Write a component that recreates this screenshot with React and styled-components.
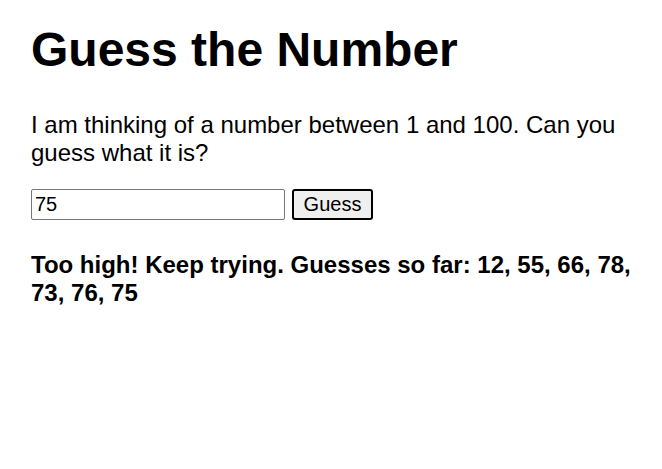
import React, { useState } from "react";
import styled, { createGlobalStyle } from "styled-components";

const GlobalStyle = createGlobalStyle`
  body {
    margin: 0;
    background: #ffffff;
    font-family: "Liberation Sans", Arial, sans-serif;
    color: #000000;
  }
`;

const Page = styled.div`
  padding: 0 31px;
`;

const Title = styled.h1`
  font-size: 48px;
  font-weight: bold;
  margin: 22px 0 34px;
`;

const Intro = styled.p`
  font-size: 24px;
  margin: 0 0 23px;
  line-height: 1.15;
`;

const Form = styled.form`
  display: flex;
  gap: 7px;
  align-items: stretch;
`;

const Input = styled.input`
  width: 254px;
  box-sizing: border-box;
  height: 31px;
  font-family: inherit;
  font-size: 20px;
  padding: 2px 3px;
  border: 1px solid #767676;
  border-radius: 2px;
`;

const Button = styled.button`
  font-family: inherit;
  font-size: 20px;
  height: 31px;
  width: 81px;
  box-sizing: border-box;
  background: #efefef;
  border: 2px solid #000000;
  border-radius: 3px;
  color: #000000;
`;

const Result = styled.p`
  font-size: 24px;
  font-weight: bold;
  line-height: 1.15;
  margin: 31px 0 0;
`;

const App = () => {
  const [value, setValue] = useState("75");
  const guesses = [12, 55, 66, 78, 73, 76, 75];
  const message = `Too high! Keep trying. Guesses so far: ${guesses.join(", ")}`;

  return (
    <Page>
      <GlobalStyle />
      <Title>Guess the Number</Title>
      <Intro>I am thinking of a number between 1 and 100. Can you guess what it is?</Intro>
      <Form onSubmit={(e) => e.preventDefault()}>
        <Input value={value} onChange={(e) => setValue(e.target.value)} />
        <Button type="submit">Guess</Button>
      </Form>
      <Result>{message}</Result>
    </Page>
  );
};

export default App;
